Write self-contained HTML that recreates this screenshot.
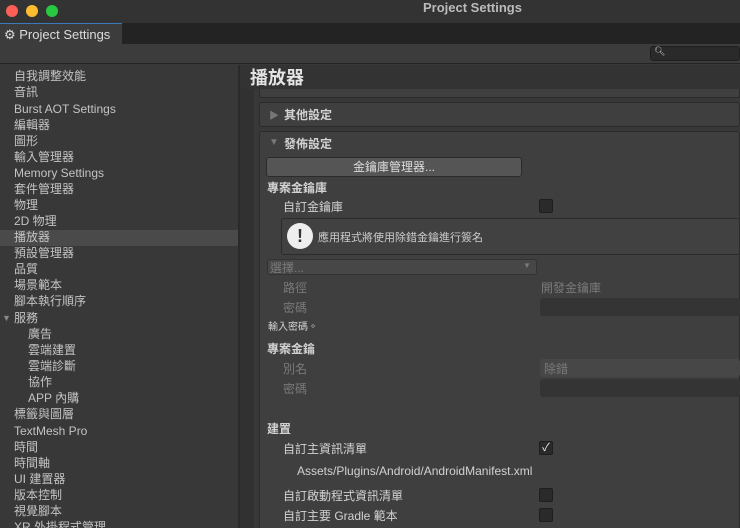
<!DOCTYPE html><html style="width:740px;height:528px;overflow:hidden"><head><meta charset="utf-8"><style>
*{margin:0;padding:0;box-sizing:border-box}
body{width:740px;height:528px;overflow:hidden;background:#383838;font-family:"Liberation Sans","Noto Sans CJK TC",sans-serif;color:#c4c4c4;font-size:12px;position:relative}
.a{position:absolute;white-space:nowrap}
.side div{position:absolute;left:14px;height:16px;line-height:16px}
.cb{position:absolute;width:14px;height:14px;background:#2a2a2a;border:1px solid #1e1e1e;border-radius:2px;left:539px}
.lab{color:#d2d2d2}
.dim{color:#7a7a7a}
</style></head><body>
<div class="a" style="left:0;top:0;width:740px;height:23px;background:#333"></div>
<div class="a" style="left:6px;top:5px;width:12px;height:12px;border-radius:6px;background:#fe5f57"></div>
<div class="a" style="left:26px;top:5px;width:12px;height:12px;border-radius:6px;background:#febc2e"></div>
<div class="a" style="left:46px;top:5px;width:12px;height:12px;border-radius:6px;background:#28c840"></div>
<div class="a" style="left:423px;top:0;font-size:13px;font-weight:bold;color:#bbb;line-height:16px">Project Settings</div>
<div class="a" style="left:0;top:23px;width:740px;height:21px;background:#232323"></div>
<div class="a" style="left:0;top:23px;width:122px;height:21px;background:#3c3c3c;border-top:1px solid #3a79bb"></div>
<div class="a" style="left:4px;top:27px;font-size:13px;color:#ddd">⚙ Project Settings</div>
<div class="a" style="left:0;top:44px;width:740px;height:20px;background:#3c3c3c;border-bottom:1px solid #232323"></div>
<div class="a" style="left:650px;top:46px;width:90px;height:15px;background:#2a2a2a;border:1px solid #1f1f1f;border-radius:3px"></div>
<div class="a" style="left:654px;top:46px;font-size:9px;color:#ccc">🔍︎</div>
<div class="a" style="left:238px;top:65px;width:2px;height:463px;background:#2a2a2a"></div>
<div class="a" style="left:0;top:230px;width:238px;height:16px;background:#4a4a4a"></div>
<div class="side">
<div style="top:68px">自我調整效能</div><div style="top:84px">音訊</div><div style="top:101px">Burst AOT Settings</div><div style="top:117px">編輯器</div><div style="top:133px">圖形</div><div style="top:149px">輸入管理器</div><div style="top:165px">Memory Settings</div><div style="top:181px">套件管理器</div><div style="top:197px">物理</div><div style="top:213px">2D 物理</div><div style="top:229px">播放器</div><div style="top:245px">預設管理器</div><div style="top:261px">品質</div><div style="top:277px">場景範本</div><div style="top:293px">腳本執行順序</div><div style="top:310px">服務</div>
<div style="top:326px;left:28px">廣告</div><div style="top:342px;left:28px">雲端建置</div><div style="top:358px;left:28px">雲端診斷</div><div style="top:374px;left:28px">協作</div><div style="top:390px;left:28px">APP 內購</div>
<div style="top:406px">標籤與圖層</div><div style="top:423px">TextMesh Pro</div><div style="top:439px">時間</div><div style="top:455px">時間軸</div><div style="top:471px">UI 建置器</div><div style="top:487px">版本控制</div><div style="top:503px">視覺腳本</div><div style="top:519px;height:9px;overflow:hidden">XR 外掛程式管理</div>
</div>
<div class="a" style="left:2px;top:313px;font-size:9px;color:#888">▼</div>
<div class="a" style="left:240px;top:65px;width:500px;height:24px;background:#333"></div>
<div class="a" style="left:250px;top:66px;font-size:18px;font-weight:bold;color:#e4e4e4;line-height:24px">播放器</div>
<div class="a" style="left:240px;top:89px;width:14px;height:439px;background:#313131"></div>
<div class="a" style="left:259px;top:89px;width:481px;height:9px;background:#3f3f3f;border:1px solid #2b2b2b;border-top:none"></div>
<div class="a" style="left:259px;top:102px;width:481px;height:25px;background:#3f3f3f;border:1px solid #2b2b2b;border-radius:3px"></div>
<div class="a" style="left:269px;top:107px;font-size:10px;color:#777">▶</div>
<div class="a lab" style="left:284px;top:106px;font-weight:bold">其他設定</div>
<div class="a" style="left:259px;top:131px;width:481px;height:400px;background:#3f3f3f;border:1px solid #2b2b2b;border-radius:3px"></div>
<div class="a" style="left:269px;top:137px;font-size:10px;color:#777">▼</div>
<div class="a lab" style="left:284px;top:135px;font-weight:bold">發佈設定</div>
<div class="a" style="left:266px;top:157px;width:256px;height:20px;background:#555;border:1px solid #2b2b2b;border-radius:3px;text-align:center;line-height:18px;color:#ddd">金鑰庫管理器...</div>
<div class="a lab" style="left:267px;top:179px;font-weight:bold">專案金鑰庫</div>
<div class="a lab" style="left:283px;top:198px">自訂金鑰庫</div>
<div class="cb" style="top:199px"></div>
<div class="a" style="left:281px;top:218px;width:459px;height:37px;background:#414141;border:1px solid #2b2b2b;border-radius:3px"></div>
<div class="a" style="left:287px;top:223px;width:26px;height:26px;border-radius:13px;background:#eee;color:#333;font-weight:bold;font-size:18px;text-align:center;line-height:26px">!</div>
<div class="a" style="left:318px;top:229px;font-size:11px;color:#ccc">應用程式將使用除錯金鑰進行簽名</div>
<div class="a" style="left:267px;top:259px;width:270px;height:16px;background:#474747;border:1px solid #333;border-radius:3px"></div>
<div class="a dim" style="left:270px;top:259px">選擇...</div>
<div class="a dim" style="left:523px;top:261px;font-size:8px">▼</div>
<div class="a dim" style="left:283px;top:279px">路徑</div>
<div class="a dim" style="left:541px;top:279px">開發金鑰庫</div>
<div class="a dim" style="left:283px;top:299px">密碼</div>
<div class="a" style="left:540px;top:298px;width:200px;height:18px;background:#343434;border-radius:3px"></div>
<div class="a lab" style="left:268px;top:318px;font-size:10px">輸入密碼。</div>
<div class="a lab" style="left:267px;top:340px;font-weight:bold">專案金鑰</div>
<div class="a dim" style="left:283px;top:360px">別名</div>
<div class="a" style="left:540px;top:359px;width:200px;height:18px;background:#474747;border-radius:3px"></div>
<div class="a dim" style="left:544px;top:360px">除錯</div>
<div class="a dim" style="left:283px;top:380px">密碼</div>
<div class="a" style="left:540px;top:379px;width:200px;height:18px;background:#343434;border-radius:3px"></div>
<div class="a lab" style="left:267px;top:420px;font-weight:bold">建置</div>
<div class="a lab" style="left:283px;top:440px">自訂主資訊清單</div>
<div class="cb" style="top:441px;color:#eee;font-size:11px;line-height:12px;text-align:center">✓</div>
<div class="a lab" style="left:297px;top:464px">Assets/Plugins/Android/AndroidManifest.xml</div>
<div class="a lab" style="left:283px;top:487px">自訂啟動程式資訊清單</div>
<div class="cb" style="top:488px"></div>
<div class="a lab" style="left:283px;top:507px">自訂主要 Gradle 範本</div>
<div class="cb" style="top:508px"></div>
</body></html>
